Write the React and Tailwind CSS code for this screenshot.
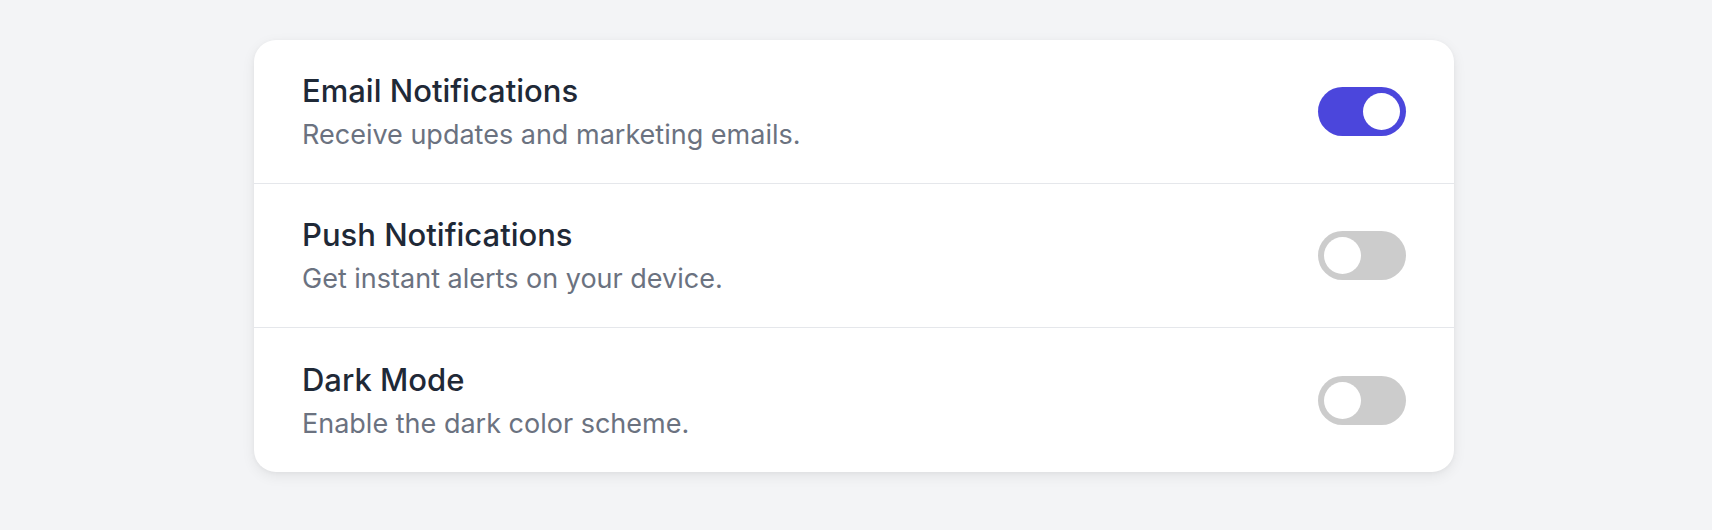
import { useState } from 'react'

const settings = [
    { id: 'email', title: 'Email Notifications', desc: 'Receive updates and marketing emails.', on: true },
    { id: 'push', title: 'Push Notifications', desc: 'Get instant alerts on your device.', on: false },
    { id: 'dark', title: 'Dark Mode', desc: 'Enable the dark color scheme.', on: false },
]

function Toggle({ checked, onChange }) {
    return (
        <button
            type="button"
            role="switch"
            aria-checked={checked}
            onClick={() => onChange(!checked)}
            className={
                'relative flex h-[49px] w-[88px] shrink-0 items-center rounded-full px-[6px] transition-colors ' +
                (checked ? 'justify-end bg-[#4b46dc]' : 'justify-start bg-[#cccccc]')
            }
        >
            <span className="block h-[37px] w-[37px] rounded-full bg-white" />
        </button>
    )
}

export default function App() {
    const [state, setState] = useState(() => Object.fromEntries(settings.map(s => [s.id, s.on])))

    return (
        <div
            className="min-h-screen bg-[#f3f4f6] pt-10 pr-1"
            style={{ fontFamily: 'Inter, "Noto Sans", sans-serif' }}
        >
            <div className="mx-auto w-[1200px] divide-y divide-[#e5e7eb] overflow-hidden rounded-[22px] bg-white shadow-[0_4px_14px_rgba(0,0,0,0.07),0_1px_4px_rgba(0,0,0,0.04)]">
                {settings.map(s => (
                    <div key={s.id} className="flex h-[144px] items-center justify-between pl-[48px] pr-[48px]">
                        <div className="flex flex-col">
                            <span className="text-[31px] leading-[37px] font-medium text-[#1f2937]">{s.title}</span>
                            <span className="mt-[9px] text-[27px] leading-[33px] text-[#6b7280]">{s.desc}</span>
                        </div>
                        <Toggle
                            checked={state[s.id]}
                            onChange={v => setState(prev => ({ ...prev, [s.id]: v }))}
                        />
                    </div>
                ))}
            </div>
        </div>
    )
}
